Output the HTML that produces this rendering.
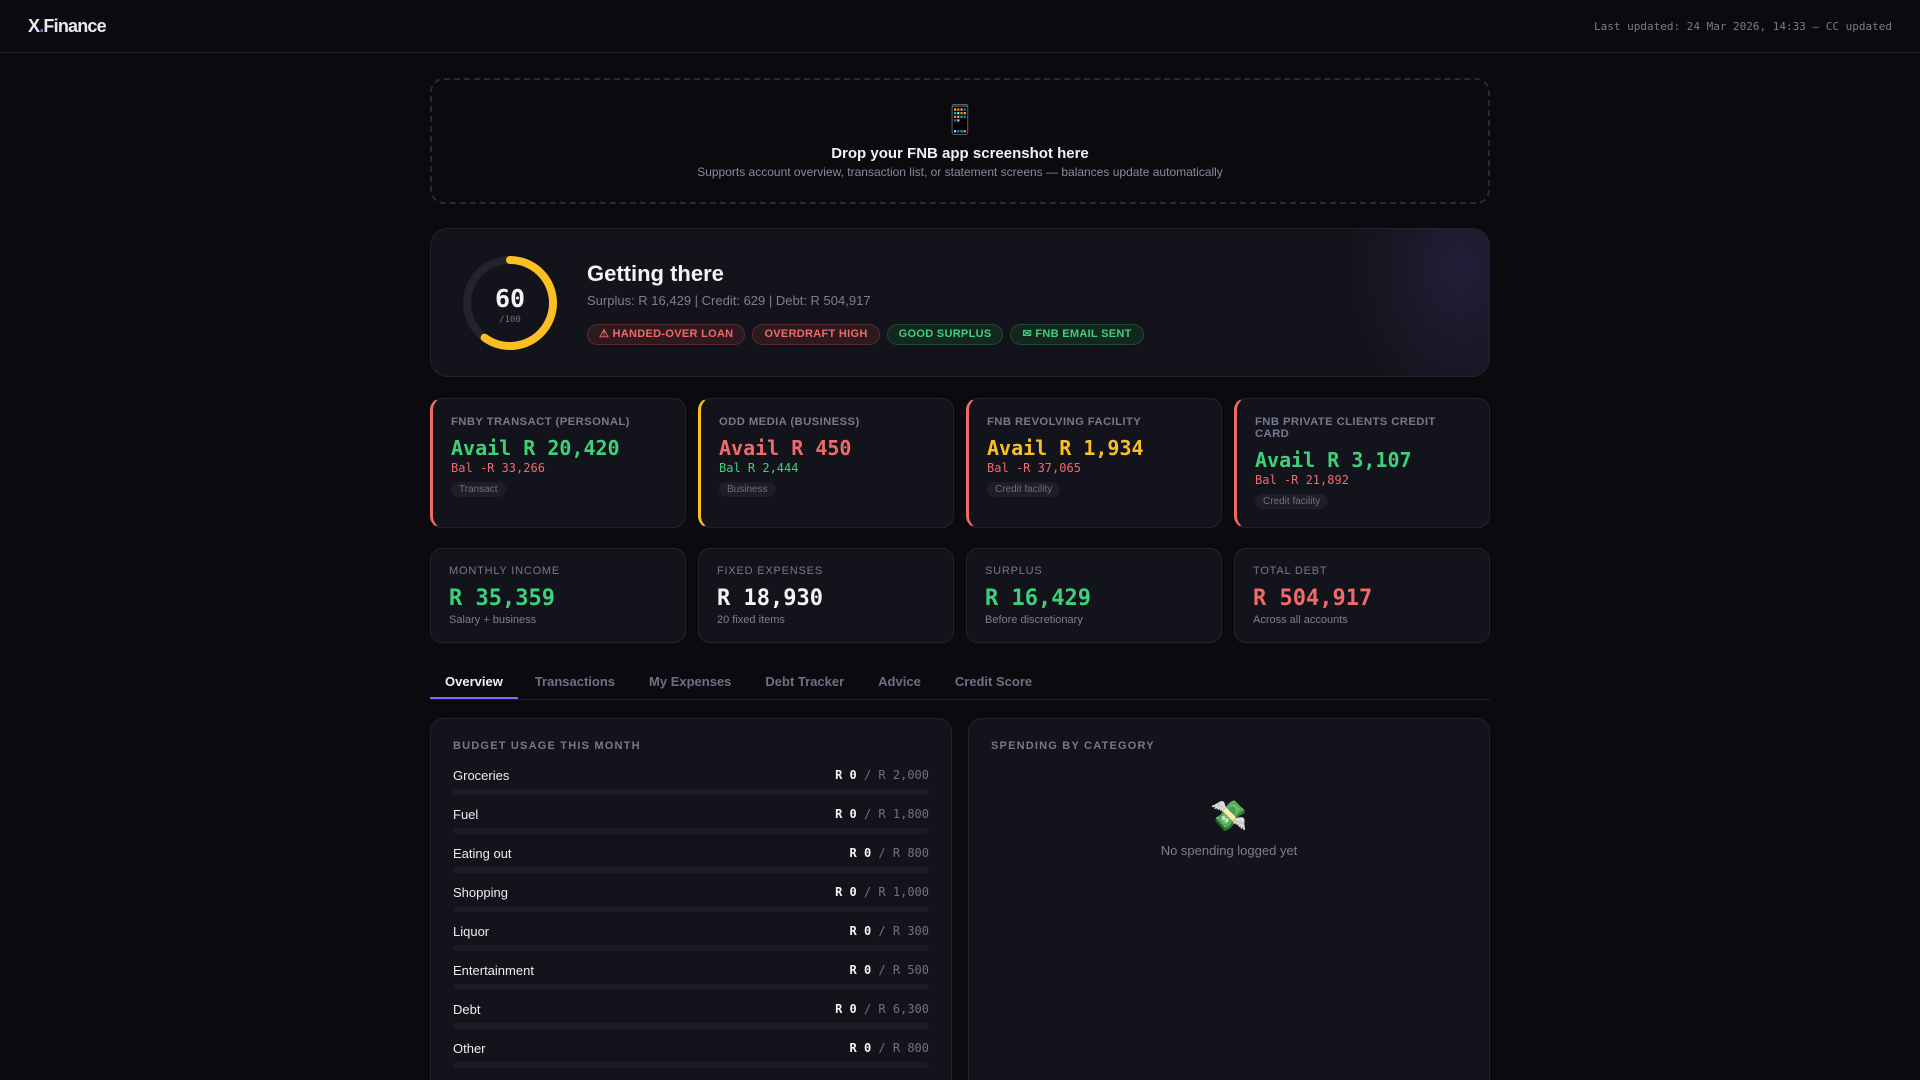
<!DOCTYPE html>
<html><head><meta charset="utf-8"><style>
*{box-sizing:border-box;margin:0;padding:0}
html,body{width:1920px;height:1080px;overflow:hidden}
body{background:#0a0a0f;font-family:"Liberation Sans",sans-serif;color:#e8e8ef;position:relative}
.mono{font-family:"DejaVu Sans Mono","Liberation Mono",monospace}
.hdr{height:53px;border-bottom:1px solid #1f1f2a;display:flex;align-items:center;justify-content:space-between;padding:0 28px}
.logo{font-size:18px;font-weight:700;letter-spacing:-.8px}
.logo span{color:#7c6cf5}
.upd{font-size:11px;color:#7a7a8e}
.wrap{position:absolute;left:430px;width:1060px;top:78px}
.drop{height:126px;border:2px dashed #2a2a36;border-radius:14px;text-align:center;padding-top:25px}
.drop .ic{font-size:28px;line-height:30px}
.drop h3{font-size:15px;margin-top:10px;color:#f0f0f5}
.drop p{font-size:12px;color:#8a8aa0;margin-top:3px}
.score{position:absolute;top:150px;left:0;width:1060px;height:149px;border:1px solid #23232e;border-radius:18px;background:radial-gradient(ellipse 110px 150px at 1030px 40px,#211f38,transparent),#13131b}
.ring{position:absolute;left:30px;top:25px}
.st{position:absolute;left:156px;top:32px}
.st h2{font-size:22px;font-weight:700;color:#f3f3f8}
.st p{font-size:13px;color:#7e7e92;margin-top:6px}
.tags{margin-top:16px;display:flex;gap:7px}
.tag{font-size:11px;font-weight:700;height:21px;line-height:19px;padding:0 11px;border-radius:11px;letter-spacing:.3px;white-space:nowrap}
.r{background:#2d1a1f;border:1px solid #5a2a30;color:#f06a6a}
.g{background:#13271e;border:1px solid #1f4a33;color:#3ed17c}
.acc{position:absolute;top:320px;height:130px;width:256px;border:1px solid #23232e;border-radius:12px;background:#13131b;padding:17px 18px}
.acc .t{font-size:11.3px;font-weight:700;color:#777790;letter-spacing:.4px;line-height:12px}
.acc .v{font-size:20px;font-weight:700;margin-top:8px}
.acc .b{font-size:12px;margin-top:1px}
.acc .k{display:inline-block;font-size:10px;color:#6e6e82;background:#1e1e28;border-radius:8px;padding:2px 8px;margin-top:7px}
.stat{position:absolute;top:470px;height:95px;width:256px;border:1px solid #23232e;border-radius:12px;background:#13131b;padding:16px 18px}
.stat .t{font-size:11px;color:#777790;letter-spacing:.8px}
.stat .v{font-size:22px;font-weight:700;margin-top:9px}
.stat .s{font-size:11px;color:#7e7e92;margin-top:3px}
.tabs{position:absolute;top:587px;left:0;width:1060px;height:35px;border-bottom:1px solid #1f1f2a;display:flex}
.tabs div{font-size:13px;font-weight:700;color:#6f6f88;padding:9px 17px 0}
.tabs .a{color:#f0f0f5;border-bottom:2px solid #7c6cf5;padding-left:15px;padding-right:15px}
.pan{position:absolute;top:640px;height:362px;border:1px solid #23232e;border-bottom:none;border-radius:14px 14px 0 0;background:#13131b;padding:21px 22px;overflow:hidden}
.pan h4{font-size:11px;letter-spacing:1.2px;color:#777790;padding-bottom:4px}
.row{margin-top:12px}
.row .l{display:flex;justify-content:space-between;font-size:13px;color:#ececf2}
.row .l .m{font-size:12px;color:#707084}
.row .l .m b{color:#f3f3f8}
.bar{height:6px;background:#1c1c26;border-radius:3px;margin-top:6px}
</style></head><body>
<div class="hdr"><div class="logo">X<span>.</span>Finance</div><div class="upd mono">Last updated: 24 Mar 2026, 14:33 — CC updated</div></div>
<div class="wrap">
<div class="drop"><div class="ic">📱</div><h3>Drop your FNB app screenshot here</h3><p>Supports account overview, transaction list, or statement screens — balances update automatically</p></div>
<div class="score">
<svg class="ring" width="98" height="98" viewBox="0 0 98 98"><circle cx="49" cy="49" r="43" fill="none" stroke="#23232c" stroke-width="8"/><circle cx="49" cy="49" r="43" fill="none" stroke="#fbbf24" stroke-width="8" stroke-linecap="round" stroke-dasharray="162 400" transform="rotate(-90 49 49)"/><text x="49" y="53" text-anchor="middle" font-family="DejaVu Sans Mono,monospace" font-weight="700" font-size="25" fill="#f3f3f8">60</text><text x="49" y="68" text-anchor="middle" font-family="DejaVu Sans Mono,monospace" font-size="9" fill="#707084">/100</text></svg>
<div class="st"><h2>Getting there</h2><p>Surplus: R 16,429 | Credit: 629 | Debt: R 504,917</p>
<div class="tags"><span class="tag r">⚠ HANDED-OVER LOAN</span><span class="tag r">OVERDRAFT HIGH</span><span class="tag g">GOOD SURPLUS</span><span class="tag g">✉ FNB EMAIL SENT</span></div></div>
</div>
<div class="acc" style="left:0;border-left:3px solid #f06a6a"><div class="t">FNBY TRANSACT (PERSONAL)</div><div class="v mono" style="color:#3ed17c">Avail R 20,420</div><div class="b mono" style="color:#f06a6a">Bal -R 33,266</div><div class="k">Transact</div></div>
<div class="acc" style="left:268px;border-left:3px solid #fbbf24"><div class="t">ODD MEDIA (BUSINESS)</div><div class="v mono" style="color:#f06a6a">Avail R 450</div><div class="b mono" style="color:#3ed17c">Bal R 2,444</div><div class="k">Business</div></div>
<div class="acc" style="left:536px;border-left:3px solid #f06a6a"><div class="t">FNB REVOLVING FACILITY</div><div class="v mono" style="color:#fbbf24">Avail R 1,934</div><div class="b mono" style="color:#f06a6a">Bal -R 37,065</div><div class="k">Credit facility</div></div>
<div class="acc" style="left:804px;border-left:3px solid #f06a6a"><div class="t">FNB PRIVATE CLIENTS CREDIT<br>CARD</div><div class="v mono" style="color:#3ed17c">Avail R 3,107</div><div class="b mono" style="color:#f06a6a">Bal -R 21,892</div><div class="k">Credit facility</div></div>
<div class="stat" style="left:0"><div class="t">MONTHLY INCOME</div><div class="v mono" style="color:#3ed17c">R 35,359</div><div class="s">Salary + business</div></div>
<div class="stat" style="left:268px"><div class="t">FIXED EXPENSES</div><div class="v mono" style="color:#f3f3f8">R 18,930</div><div class="s">20 fixed items</div></div>
<div class="stat" style="left:536px"><div class="t">SURPLUS</div><div class="v mono" style="color:#3ed17c">R 16,429</div><div class="s">Before discretionary</div></div>
<div class="stat" style="left:804px"><div class="t">TOTAL DEBT</div><div class="v mono" style="color:#f06a6a">R 504,917</div><div class="s">Across all accounts</div></div>
<div class="tabs"><div class="a">Overview</div><div>Transactions</div><div>My Expenses</div><div>Debt Tracker</div><div>Advice</div><div>Credit Score</div></div>
<div class="pan" style="left:0;width:522px"><h4>BUDGET USAGE THIS MONTH</h4>
<div class="row"><div class="l"><span>Groceries</span><span class="m mono"><b>R 0</b> / R 2,000</span></div><div class="bar"></div></div>
<div class="row"><div class="l"><span>Fuel</span><span class="m mono"><b>R 0</b> / R 1,800</span></div><div class="bar"></div></div>
<div class="row"><div class="l"><span>Eating out</span><span class="m mono"><b>R 0</b> / R 800</span></div><div class="bar"></div></div>
<div class="row"><div class="l"><span>Shopping</span><span class="m mono"><b>R 0</b> / R 1,000</span></div><div class="bar"></div></div>
<div class="row"><div class="l"><span>Liquor</span><span class="m mono"><b>R 0</b> / R 300</span></div><div class="bar"></div></div>
<div class="row"><div class="l"><span>Entertainment</span><span class="m mono"><b>R 0</b> / R 500</span></div><div class="bar"></div></div>
<div class="row"><div class="l"><span>Debt</span><span class="m mono"><b>R 0</b> / R 6,300</span></div><div class="bar"></div></div>
<div class="row"><div class="l"><span>Other</span><span class="m mono"><b>R 0</b> / R 800</span></div><div class="bar"></div></div>
</div>
<div class="pan" style="left:538px;width:522px"><h4>SPENDING BY CATEGORY</h4>
<div style="text-align:center;margin-top:44px;font-size:30px;line-height:34px">💸</div>
<div style="text-align:center;font-size:13px;color:#7e7e92;margin-top:9px">No spending logged yet</div></div>
</div>
</body></html>
